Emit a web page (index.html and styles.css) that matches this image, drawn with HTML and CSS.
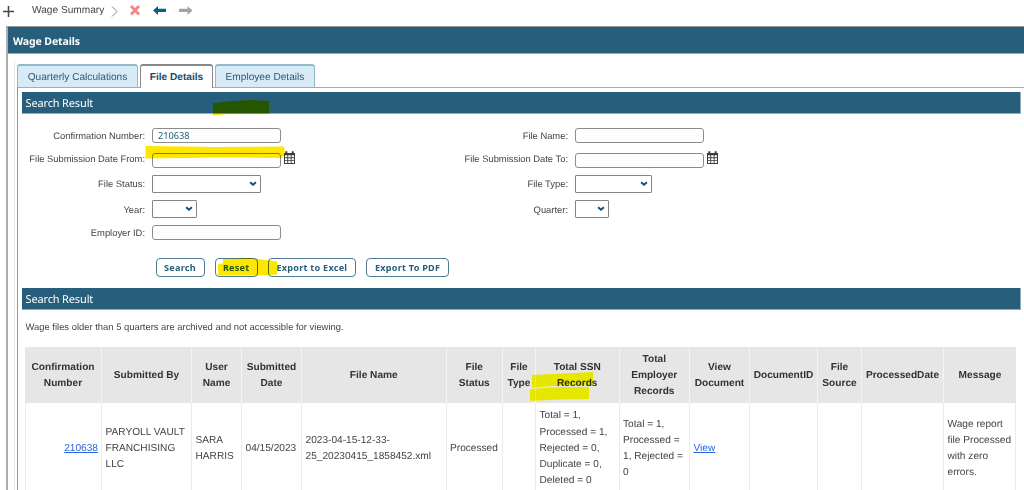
FILE: index.html
```html
<!DOCTYPE html>
<html lang="en">
<head>
<meta charset="utf-8">
<title>Wage Details</title>
<link rel="stylesheet" href="styles.css">
</head>
<body>
<svg class="defs" width="0" height="0" aria-hidden="true">
  <symbol id="calendar" viewBox="0 0 11 13">
    <path fill="#3c3c3c" fill-rule="evenodd" d="M0 2h1.3V.3h2V2h4.400V.3h2V2H11v11H0zM1 4.300v2h2.300v-2zm3.200 0v2h2.500v-2zm3.400 0v2h2.400v-2zM1 7.200v2h2.300v-2zm3.200 0v2h2.500v-2zm3.400 0v2h2.400v-2zM1 10.100v2h2.300v-2zm3.200 0v2h2.500v-2zm3.400 0v2h2.400v-2z"/>
  </symbol>
  <symbol id="chevron" viewBox="0 0 8 6">
    <path fill="none" stroke="#17506f" stroke-width="2" d="M1.100 1.300 4 3.800l2.900-2.500"/>
  </symbol>
</svg>
<header class="toolbar">
  <svg class="plus" width="12" height="12"><path stroke="#444" stroke-width="1.5" d="M0 5.500h11M5.500 0v11"/></svg>
  <span class="crumb">Wage Summary</span>
  <svg class="crumb-arrow" width="8" height="13"><path fill="none" stroke="#888" d="M1 1.500 6 6.500 1 11.500"/></svg>
  <svg class="close" width="12" height="11"><path stroke="#f98383" stroke-width="2.800" d="m1 1 8 8.500M9 1l-8 8.500"/></svg>
  <svg class="back" width="14" height="9"><path fill="#0f5f80" d="M0 4.500 5 0v2.800H13v3.200H5v3z"/></svg>
  <svg class="next" width="14" height="9"><path fill="#a3a3a3" d="M13.500 4.500 8.500 0v2.800H0v3.200h8.500v3z"/></svg>
</header>
<main class="panel">
  <h1 class="panel-title"><span>Wage Details</span></h1>
  <div class="panel-body">
    <nav class="tabs">
      <a class="tab tab-calc"><span>Quarterly Calculations</span></a>
      <a class="tab tab-file active"><span>File Details</span></a>
      <a class="tab tab-emp"><span>Employee Details</span></a>
    </nav>
    <section class="tab-panel">
      <h2 class="bar">Search Result</h2>
      <form class="form">
        <label>Confirmation Number:</label><div class="field"><input class="text" value="210638"></div>
        <label>File Name:</label><div class="field"><input class="text"></div>
        <label class="date">File Submission Date From:</label><div class="field date-field"><input class="text"><svg class="cal"><use href="#calendar"/></svg></div>
        <label class="date">File Submission Date To:</label><div class="field date-field"><input class="text"><svg class="cal"><use href="#calendar"/></svg></div>
        <label class="up">File Status:</label><div class="field"><div class="select status"><svg><use href="#chevron"/></svg></div></div>
        <label class="up">File Type:</label><div class="field"><div class="select type"><svg><use href="#chevron"/></svg></div></div>
        <label>Year:</label><div class="field"><div class="select year"><svg><use href="#chevron"/></svg></div></div>
        <label>Quarter:</label><div class="field"><div class="select quarter"><svg><use href="#chevron"/></svg></div></div>
        <label>Employer ID:</label><div class="field"><input class="text"></div>
      </form>
      <div class="buttons">
        <button class="btn-search">Search</button>
        <button class="btn-reset">Reset</button>
        <button class="btn-excel">Export to Excel</button>
        <button class="btn-pdf">Export To PDF</button>
      </div>
      <h2 class="bar">Search Result</h2>
      <p class="notice">Wage files older than 5 quarters are archived and not accessible for viewing.</p>
      <div class="grid head">
        <div>Confirmation<br>Number</div><div>Submitted By</div><div>User<br>Name</div><div>Submitted<br>Date</div><div>File Name</div><div>File<br>Status</div><div>File<br>Type</div><div>Total SSN<br>Records</div><div>Total<br>Employer<br>Records</div><div>View<br>Document</div><div>DocumentID</div><div>File<br>Source</div><div>ProcessedDate</div><div>Message</div>
      </div>
      <div class="grid row">
        <div class="right"><a>210638</a></div><div>PARYOLL VAULT<br>FRANCHISING<br>LLC</div><div>SARA<br>HARRIS</div><div>04/15/2023</div><div>2023-04-15-12-33-<br>25_20230415_1858452.xml</div><div>Processed</div><div></div><div>Total = 1,<br>Processed = 1,<br>Rejected = 0,<br>Duplicate = 0,<br>Deleted = 0</div><div>Total = 1,<br>Processed =<br>1, Rejected =<br>0</div><div><a>View</a></div><div></div><div></div><div></div><div>Wage report<br>file Processed<br>with zero<br>errors.</div>
      </div>
    </section>
  </div>
</main>
<svg class="marker" width="1024" height="490" aria-hidden="true">
  <g fill="#ffe600">
    <path d="M213 103l20-2 18-1 18 1v13l-42 0-14 1.500z"/>
    <path d="M145.500 146l70 1 69-.5v9l-3 2.500-60-.5-76 1z"/>
    <path d="M218 264l5-.5v-4.500l26-1 10 1 18 2.500v13l-19 1-40 0z"/>
  </g>
  <g fill="#ff0">
    <path d="M532 375l20-1 41-2v13.500l-41 .5-20 2z"/>
    <path d="M530 389l32-2 27 0v12l-30 .5-29 1.500z"/>
  </g>
</svg>
</body>
</html>
```
FILE: styles.css
```css
* { box-sizing: border-box; }
html, body { height: 490px; overflow: hidden; }
body { margin: 0; background: #fff; color: #444; font: 10.15px "Liberation Sans", Arial, sans-serif; text-rendering: geometricPrecision; white-space: nowrap; }
h1, h2, p { margin: 0; }
.defs, .marker { position: absolute; top: 0; left: 0; }
.marker { mix-blend-mode: multiply; pointer-events: none; }
.toolbar { display: flex; align-items: center; height: 26px; padding: 0 0 5px 3px; }
.plus { margin-right: 17px; margin-top: 2px; }
.crumb { width: 72px; color: #444; }
.crumb-arrow { margin-left: 7px; margin-top: 2px; }
.close { margin-left: 11px; }
.back { margin-left: 11px; }
.next { margin-left: 12px; }
.panel { height: 464px; margin-left: 6px; border-left: 2px solid #aaa; border-top: 1px solid #999; }
.panel-title { display: flex; align-items: center; height: 27px; padding: 3px 0 0 5px; background: #265e7b; border-bottom: 1px solid #9aa; color: #fff; font: bold 10.5px "Noto Sans", sans-serif; letter-spacing: -.1px; }
.panel-body { margin: 7px 0 0 6px; border-left: 1px solid #e6e6e6; height: 429px; padding: 3px 0 0 2px; }
.tabs { display: flex; gap: 2px; height: 23px; }
.tab { display: flex; align-items: center; justify-content: center; height: 23px; padding-top: 1px; border: 1px solid #8fbacb; border-top-width: 2px; border-bottom: 0; border-radius: 3px 3px 0 0; background: #d8eaf5; color: #265e7b; }
.tab-calc { width: 121px; }
.tab-file { width: 73px; }
.tab-emp { width: 100px; }
.tab.active { height: 24px; z-index: 1; padding-bottom: 1px; background: #fff; border-color: #888; color: #174b66; font-weight: bold; }
.tab-panel { border-left: 1px solid #999; border-top: 1px solid #aaa; height: 410px; padding: 4px 0 0 4px; }
.bar { display: flex; align-items: center; width: 999px; height: 22px; padding: 2px 0 0 3.500px; background: #265e7b; border: 1px solid #8eabb9; border-width: 0 1px 1px 0; color: #fff; font: 11px "Noto Sans", sans-serif; letter-spacing: -.15px; }
.form { display: grid; grid-template-columns: 123px 293px 130px 300px; grid-template-rows: 25px 24px 24px 26px 21px; align-items: center; padding-top: 9px; height: 143px; font-size: 9.4px; }
.form label { text-align: right; }
.form .date { padding-bottom: 3px; }
.form .up { padding-bottom: 1px; }
.field { display: flex; align-items: center; padding-left: 7px; }
.text { width: 129px; height: 15px; padding: 0 5px; border: 1px solid #8b8b8b; border-radius: 3px; background: #fff; color: #265e7b; font: 9.2px "Noto Sans", sans-serif; }
.cal { width: 11px; height: 13px; margin: -6px 0 0 2.500px; }
.select { display: flex; align-items: center; justify-content: flex-end; height: 18px; padding-right: 3px; border: 1px solid #858585; border-radius: 1px; }
.select svg { width: 8px; height: 6px; }
.status { width: 109px; }
.type { width: 77px; }
.year { width: 45px; }
.quarter { width: 34px; }
.buttons { display: flex; height: 31px; padding: 1px 0 0 133.500px; }
.buttons button { height: 19px; padding: 0; margin-right: 10.200px; border: 1px solid #4d7c94; border-radius: 4px; background: #fff; color: #265e7b; font: bold 9.1px "Noto Sans", sans-serif; letter-spacing: .25px; }
.buttons .btn-search { width: 49px; }
.buttons .btn-reset { width: 43px; }
.buttons .btn-excel { width: 88px; }
.buttons .btn-pdf { width: 83px; }
.notice { height: 37px; padding-left: 3.500px; line-height: 34px; font-size: 9.42px; }
.grid { display: grid; margin-left: 3px; grid-template-columns: 77px 90px 50px 60px 144.500px 56.500px 33px 83.500px 70.500px 60px 68px 44px 82px 72px; line-height: 16.200px; }
.grid > div { border-right: 1.500px solid #f4f4f4; }
.head { height: 56px; color: #333; font-weight: bold; text-align: center; }
.head > div { background: #e6e6e6; align-content: center; padding: 2px 0 0 0; }
.head > div:last-child { border-right: 0; }
.row { height: 91px; }
.row > div { align-content: center; padding: 1px 0 0 3.500px; border-right-color: #ececec; }
.row > div:first-child { border-left: 1px solid #eee; }
.row > .right { text-align: right; padding-right: 3px; }
.row a { color: #2864dc; text-decoration: underline; }
```
